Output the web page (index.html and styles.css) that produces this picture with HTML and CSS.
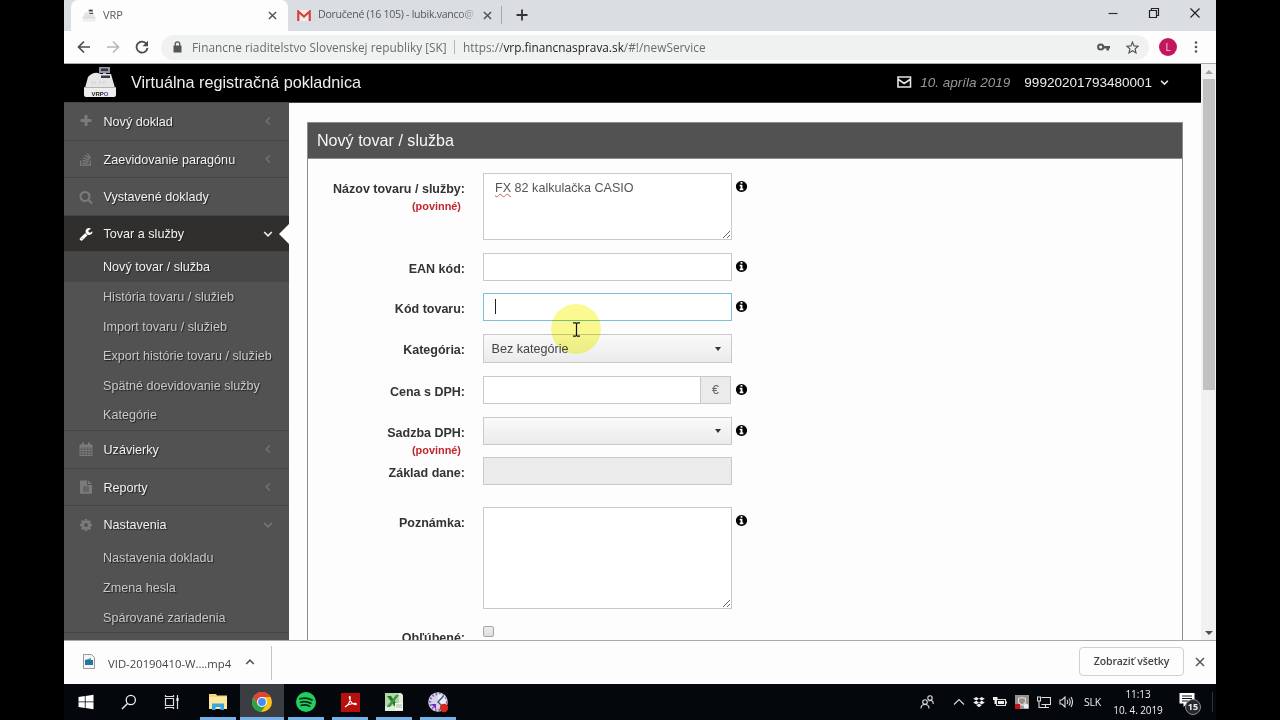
FILE: index.html
```html
<!DOCTYPE html>
<html lang="sk">
<head>
    <meta charset="UTF-8">
    <title>VRP</title>
    <link rel="stylesheet" href="styles.css">
</head>
<body>
<svg class="defs">
    <symbol id="info" viewBox="0 0 1792 1792"><path d="M1152 1376v-160q0-14-9-23t-23-9h-96v-512q0-14-9-23t-23-9h-320q-14 0-23 9t-9 23v160q0 14 9 23t23 9h96v320h-96q-14 0-23 9t-9 23v160q0 14 9 23t23 9h448q14 0 23-9t9-23zm-128-896v-160q0-14-9-23t-23-9h-192q-14 0-23 9t-9 23v160q0 14 9 23t23 9h192q14 0 23-9t9-23zm640 416q0 209-103 385.5t-279.5 279.5-385.5 103-385.5-103-279.5-279.5-103-385.5 103-385.5 279.5-279.5 385.5-103 385.5 103 279.5 279.5 103 385.5z"/></symbol>
    <symbol id="left" viewBox="0 0 10 10"><path d="M6.8 1.5 3.2 5l3.6 3.5" fill="none" stroke="currentColor" stroke-width="1.2"/></symbol>
    <symbol id="down" viewBox="0 0 10 10"><path d="M1.2 3 5 6.8 8.8 3" fill="none" stroke="currentColor" stroke-width="1.6"/></symbol>
    <symbol id="close" viewBox="0 0 10 10"><path d="M1 1l8 8M9 1 1 9" fill="none" stroke="currentColor" stroke-width="1.5"/></symbol>
    <symbol id="register" viewBox="0 0 34 32">
        <path d="M16 1h11v6H16z" fill="#9299a3"/><path d="M18 2.5h7v2.5h-7z" fill="#30343c"/>
        <path d="M20 7h3v3h-3z" fill="#bbb"/>
        <path d="M5 11q5-5 10-4l3 1h10l4 14H2z" fill="#e6e6e6"/>
        <path d="M1 21.500h32V29q0 2-2 2H3q-2 0-2-2z" fill="#eee"/>
        <path d="M18 9.500h9v2.500h-9z" fill="#333a48"/>
        <path d="M1 21.500h32" stroke="#b5b5b5"/><path d="M9 15v3M12 15v3M17 15v3M21 15v3" stroke="#cfcfcf"/>
    </symbol>
</svg>
<div class="screen">
    <div class="tabs">
        <div class="tab active">
            <svg class="favicon" width="14" height="13"><use href="#register"/></svg>
            <span class="tab-title vrp">VRP</span>
            <svg class="x" width="9" height="9"><use href="#close"/></svg>
        </div>
        <div class="tab second">
            <svg width="14" height="11" viewBox="0 0 14 11"><path d="M1 0h12v11H1z" fill="#f3eeee"/><path d="M1.300 11V1.500L7 6.500l5.700-5V11" fill="none" stroke="#d5403a" stroke-width="2.200"/></svg>
            <span class="tab-title mail">Doručené (16 105) - lubik.vanco@</span>
            <svg class="x" width="9" height="9"><use href="#close"/></svg>
        </div>
        <svg class="plus" width="12" height="12" viewBox="0 0 12 12"><path d="M6 .5v11M.5 6h11" stroke="#333" stroke-width="1.800"/></svg>
        <div class="window-btns">
            <svg width="12" height="12" viewBox="0 0 12 12"><path d="M1.500 6.500h9" stroke="#333" stroke-width="1.200"/></svg>
            <svg width="12" height="12" viewBox="0 0 12 12"><path d="M1.500 3.500h7v7h-7zM3.500 3.500v-2h7v7h-2" fill="none" stroke="#222" stroke-width="1.200"/></svg>
            <svg width="12" height="12" viewBox="0 0 12 12"><path d="M1.500 1.500l9 9M10.500 1.500l-9 9" stroke="#222" stroke-width="1.200"/></svg>
        </div>
    </div>
    <div class="toolbar">
        <svg width="14" height="14" viewBox="0 0 14 14"><path d="M13 7H2M7 1.500 1.500 7 7 12.500" fill="none" stroke="#4a4d50" stroke-width="1.700"/></svg>
        <svg width="14" height="14" viewBox="0 0 14 14"><path d="M1 7h11M7 1.500 12.500 7 7 12.500" fill="none" stroke="#b4b6b8" stroke-width="1.500"/></svg>
        <svg width="14" height="14" viewBox="0 0 14 14"><path d="M11.500 3.800A5.500 5.500 0 1 0 12.500 8" fill="none" stroke="#4a4d50" stroke-width="1.800"/><path d="M13 .8v5.500H7.500z" fill="#4a4d50"/></svg>
        <div class="address">
            <svg width="9" height="12" viewBox="0 0 9 12"><path d="M.5 4.500h8v7h-8z" fill="#555"/><path d="M2.300 5V3a2.200 2.200 0 0 1 4.400 0v2" fill="none" stroke="#555" stroke-width="1.300"/></svg>
            <span class="owner">Financne riaditelstvo Slovenskej republiky [SK]</span>
            <span class="url">https://<b>vrp.financnasprava.sk</b>/#!/newService</span>
            <svg class="key" width="13" height="8" viewBox="0 0 13 8"><circle cx="3.700" cy="4" r="2.600" fill="none" stroke="#555" stroke-width="2"/><path d="M6 3h7v2.500h-1V7.500H9.500V5.500H6z" fill="#555"/></svg>
            <svg width="13" height="13" viewBox="0 0 13 13"><path d="m6.500 1.200 1.600 3.700 4 .3-3 2.700.9 4-3.500-2.100L3 11.900l.9-4-3-2.700 4-.3z" fill="none" stroke="#555" stroke-width="1.200"/></svg>
        </div>
        <span class="avatar">L</span>
        <svg width="4" height="14" viewBox="0 0 4 14" fill="#555"><circle cx="2" cy="2.500" r="1.300"/><circle cx="2" cy="7" r="1.300"/><circle cx="2" cy="11.500" r="1.300"/></svg>
    </div>

    <div class="viewport">
        <div class="page">
            <header class="topbar">
                <div class="logo">
                    <svg width="34" height="32"><use href="#register"/></svg>
                    <span class="logo-text">VRP<i>O</i></span>
                </div>
                <span class="brand">Virtuálna registračná pokladnica</span>
                <svg width="15" height="12" viewBox="0 0 15 12"><path d="M1 1h12.500v10H1zM1.500 3.500l5.700 4 5.800-4" fill="none" stroke="#e4e4e4" stroke-width="1.600"/></svg>
                <span class="date">10. apríla 2019</span>
                <span class="account">99920201793480001</span>
                <svg class="acc-down" width="9" height="9"><use href="#down"/></svg>
            </header>
            <div class="body">
                <nav class="sidebar">
                    <div class="item"><svg class="ico" viewBox="0 0 1792 1792"><path d="M1600 736v192q0 40-28 68t-68 28h-416v416q0 40-28 68t-68 28h-192q-40 0-68-28t-28-68v-416h-416q-40 0-68-28t-28-68v-192q0-40 28-68t68-28h416v-416q0-40 28-68t68-28h192q40 0 68 28t28 68v416h416q40 0 68 28t28 68z"/></svg><span>Nový doklad</span><svg class="arrow"><use href="#left"/></svg></div>
                    <div class="item"><svg class="ico" viewBox="0 0 14 14"><path d="M1.500 8.500v4.700h9.800V8.500M3.200 11.200h6.200M3.300 8.700l6.200.7M4 6l6 1.900M5.700 3.300l5.200 3.300M8.300 1.500l3.400 4.800" fill="none" stroke="currentColor" stroke-width="1.200"/></svg><span>Zaevidovanie paragónu</span><svg class="arrow"><use href="#left"/></svg></div>
                    <div class="item"><svg class="ico" viewBox="0 0 1792 1792"><path d="M1216 832q0-185-131.500-316.500t-316.500-131.500-316.500 131.500-131.500 316.500 131.500 316.500 316.500 131.500 316.500-131.500 131.500-316.500zm512 832q0 52-38 90t-90 38q-54 0-90-38l-343-342q-179 124-399 124-143 0-273.500-55.500t-225-150-150-225-55.500-273.500 55.500-273.500 150-225 225-150 273.500-55.500 273.500 55.500 225 150 150 225 55.500 273.500q0 220-124 399l343 343q37 37 37 90z"/></svg><span>Vystavené doklady</span></div>
                    <div class="item current"><svg class="ico" viewBox="0 0 1792 1792"><path d="M448 1472q0-26-19-45t-45-19-45 19-19 45 19 45 45 19 45-19 19-45zm644-420l-682 682q-37 37-90 37-52 0-91-37l-106-108q-38-36-38-90 0-53 38-91l681-681q39 98 114.500 173.500t173.500 114.500zm634-435q0 39-23 106-47 134-164.500 217.500t-258.500 83.500q-185 0-316.500-131.500t-131.500-316.500 131.500-316.500 316.500-131.500q58 0 121.500 16.500t107.500 46.500q16 11 16 28t-16 28l-293 169v224l193 107q5-3 79-48.500t135.500-81 70.500-35.500q15 0 23.500 10t8.500 25z"/></svg><span>Tovar a služby</span><svg class="arrow"><use href="#down"/></svg></div>
                    <ul class="sub">
                        <li class="on">Nový tovar / služba</li>
                        <li>História tovaru / služieb</li>
                        <li>Import tovaru / služieb</li>
                        <li>Export histórie tovaru / služieb</li>
                        <li>Spätné doevidovanie služby</li>
                        <li>Kategórie</li>
                    </ul>
                    <div class="item"><svg class="ico" viewBox="0 0 14 14"><path d="M1 3h12v10.500H1zM1 6h12M1 8.500h12M1 11h12M4 6v7.500M7 6v7.500M10 6v7.500" fill="none" stroke="currentColor"/><path d="M1 3h12v2.500H1zM3 .5h2v3H3zM9 .5h2v3H9z"/></svg><span>Uzávierky</span><svg class="arrow"><use href="#left"/></svg></div>
                    <div class="item"><svg class="ico" viewBox="0 0 14 14"><path fill-rule="evenodd" d="M1 .5h7V5h5v8.800H1zM9 .5 13 4H9zM4 6.500h6v1H4zm0 2h6v1H4zm0 2h6v1H4z"/></svg><span>Reporty</span><svg class="arrow"><use href="#left"/></svg></div>
                    <div class="item open"><svg class="ico" viewBox="0 0 1792 1792"><path d="M1152 896q0-106-75-181t-181-75-181 75-75 181 75 181 181 75 181-75 75-181zm512-109v222q0 12-8 23t-20 13l-185 28q-19 54-39 91 35 50 107 138 10 12 10 25t-9 23q-27 37-99 108t-94 71q-12 0-26-9l-138-108q-44 23-91 38-16 136-29 186-7 28-36 28h-222q-14 0-24.500-8.500t-11.500-21.500l-28-184q-49-16-90-37l-141 107q-10 9-25 9-14 0-25-11-126-114-165-168-7-10-7-23 0-12 8-23 15-21 51-66.500t54-70.500q-27-50-41-99l-183-27q-13-2-21-12.500t-8-23.500v-222q0-12 8-23t19-13l186-28q14-46 39-92-40-57-107-138-10-12-10-24 0-10 9-23 26-36 98.500-107.500t94.500-71.500q13 0 26 10l138 107q44-23 91-38 16-136 29-186 7-28 36-28h222q14 0 24.500 8.500t11.500 21.500l28 184q49 16 90 37l142-107q9-9 24-9 13 0 25 10 129 119 165 170 7 8 7 22 0 12-8 23-15 21-51 66.500t-54 70.500q26 50 41 98l183 28q13 2 21 12.500t8 23.500z"/></svg><span>Nastavenia</span><svg class="arrow"><use href="#down"/></svg></div>
                    <ul class="sub">
                        <li>Nastavenia dokladu</li>
                        <li>Zmena hesla</li>
                        <li>Spárované zariadenia</li>
                    </ul>
                </nav>
                <main class="content">
                    <section class="card">
                        <h1>Nový tovar / služba</h1>
                        <form>
                            <div class="row name">
                                <label>Názov tovaru / služby:<small>(povinné)</small></label>
                                <div class="field area"><u>FX</u> 82 kalkulačka CASIO</div>
                                <svg class="info"><use href="#info"/></svg>
                            </div>
                            <div class="row">
                                <label>EAN kód:</label>
                                <input class="field" type="text">
                                <svg class="info"><use href="#info"/></svg>
                            </div>
                            <div class="row code">
                                <label>Kód tovaru:</label>
                                <div class="field focus"><span class="caret"></span></div>
                                <svg class="info"><use href="#info"/></svg>
                            </div>
                            <div class="row category">
                                <label>Kategória:</label>
                                <div class="field select"><span>Bez kategórie</span></div>
                            </div>
                            <div class="row">
                                <label>Cena s DPH:</label>
                                <div class="group"><input class="field" type="text"><span class="addon">€</span></div>
                                <svg class="info"><use href="#info"/></svg>
                            </div>
                            <div class="row rate">
                                <label>Sadzba DPH:<small>(povinné)</small></label>
                                <div class="field select"></div>
                                <svg class="info"><use href="#info"/></svg>
                            </div>
                            <div class="row base">
                                <label>Základ dane:</label>
                                <input class="field" type="text" disabled>
                            </div>
                            <div class="row note">
                                <label>Poznámka:</label>
                                <textarea class="field area"></textarea>
                                <svg class="info"><use href="#info"/></svg>
                            </div>
                            <div class="row fav">
                                <label>Obľúbené:</label>
                                <span class="check"></span>
                            </div>
                        </form>
                    </section>
                </main>
            </div>
        </div>
        <div class="scrollbar">
            <span class="up"></span>
            <span class="thumb"></span>
            <span class="dn"></span>
        </div>
    </div>

    <div class="downloads">
        <div class="download">
            <svg width="12" height="15" viewBox="0 0 12 15"><path d="M.5.500h8l3 3v11H.5z" fill="#f5f5f5" stroke="#999"/><path d="M2 6h8v5H2z" fill="#2374a5"/><path d="M2 6l6-2v2z" fill="#4d91b8"/></svg>
            <span class="file">VID-20190410-W....mp4</span>
            <svg class="file-up" width="10" height="10"><use href="#down"/></svg>
        </div>
        <span class="show-all">Zobraziť všetky</span>
        <svg class="x" width="10" height="10"><use href="#close"/></svg>
    </div>

    <div class="taskbar">
        <div class="slot"><svg width="16" height="16" viewBox="0 0 16 16"><path d="M.5 3 6.800 2v5.500H.5zM7.600 1.900 15.500.800v6.700H7.600zM.5 8.300h6.300v5.600l-6.300-1zM7.600 8.300h7.900v6.900L7.600 14z" fill="#fff"/></svg></div>
        <div class="slot"><svg width="16" height="16" viewBox="0 0 16 16"><circle cx="9.800" cy="6" r="4.600" fill="none" stroke="#eee" stroke-width="1.300"/><path d="M6.500 9.500 1 15" stroke="#eee" stroke-width="1.400"/></svg></div>
        <div class="slot"><svg width="16" height="16" viewBox="0 0 16 16"><path d="M1.500 4.500h8v7h-8zM1.500 1v1.500h8V1M1.500 15v-1.500h8V15M13.500 1v14" fill="none" stroke="#ddd" stroke-width="1.200"/><path d="M12.500 4h2v3h-2z" fill="#fff"/></svg></div>
        <div class="slot app first"><svg width="20" height="18" viewBox="0 0 20 18"><path d="M1 1h7l1 1.500h10V16H1z" fill="#f6d676"/><path d="M1 4h18v12H1z" fill="#fbe79f"/><path d="M4 17v-6.500h12V17h-3.500v-3h-5v3z" fill="#39a7de"/></svg></div>
        <div class="slot app here"><svg width="20" height="20" viewBox="0 0 20 20"><circle cx="10" cy="10" r="10" fill="#fbc116"/><path d="M10 10 1.340 5A10 10 0 0 1 18.660 5H10z" fill="#df4532"/><path d="M1.340 5A10 10 0 0 0 9 19.950L14.300 12.500 5.700 12.500z" fill="#2ba24c"/><path d="M1.340 5 5.700 12.500 10 5z" fill="#df4532"/><circle cx="10" cy="10" r="5" fill="#fff"/><circle cx="10" cy="10" r="3.900" fill="#4a8af4"/></svg></div>
        <div class="slot app"><svg width="20" height="20" viewBox="0 0 20 20"><circle cx="10" cy="10" r="10" fill="#1fcf5f"/><path d="M4 6.800q6.500-2 12 1.200M4.600 10.200q5.500-1.500 10.200 1.100M5.200 13.400q4.500-1.200 8.400.9" fill="none" stroke="#0a2914" stroke-width="1.700" stroke-linecap="round"/></svg></div>
        <div class="slot app"><svg width="19" height="19" viewBox="0 0 19 19"><path d="M0 0h19v19H0z" fill="#b80f0d"/><path d="M4 14c3-1.500 5.500-5.500 5.300-9.500-.1-1.500-1.300-1-1 .5.700 3.500 3.500 6.500 6.200 6.600 1.500 0 1-1.300-.5-1.200-3.500.2-8 1.600-10 3.600z" fill="none" stroke="#fff" stroke-width="1.100"/></svg></div>
        <div class="slot app"><svg width="20" height="20" viewBox="0 0 20 20"><path d="M1 1h16l2 2v16H1z" fill="#e0eedb"/><path d="M1 1h14v13H1z" fill="#b4d8a5"/><path d="M3 4h4l8 11h-4z" fill="#257a32"/><path d="M12 3h3L6 15H2.500z" fill="#3d9445"/><path d="M11 11h8v7h-8z" fill="#f4f8f2"/><path d="M12 13h6M12 15h6" stroke="#9fc39a"/></svg></div>
        <div class="slot app"><svg width="22" height="22" viewBox="0 0 22 22"><circle cx="11" cy="11" r="9.800" fill="#d9d3ea"/><circle cx="11" cy="11" r="8" fill="none" stroke="#8460b8" stroke-width="2.500" stroke-dasharray="1.500 2"/><path d="M11 3a8 8 0 0 1 8 8 8 8 0 0 1-5 7l-3-7z" fill="#e7edf5"/><path d="M16.500 5 11 11l4 4" fill="none" stroke="#3d5382" stroke-width="1.400"/><path d="M4 13h5v5z" fill="#7229bd"/><circle cx="17" cy="17" r="4.200" fill="#d8261d"/></svg></div>
        <div class="tray">
            <svg class="people" width="14" height="14" viewBox="0 0 14 14"><circle cx="5" cy="7" r="2.300"/><path d="M1 13.500q0-4 4-4t4 4"/><circle cx="10" cy="3" r="2.200"/><path d="M8.500 6q4.500-2 4.800 3"/></svg>
            <svg width="12" height="12" viewBox="0 0 12 12"><path d="m1 8.500 5-5 5 5"/></svg>
            <svg width="12" height="12" viewBox="0 0 12 12"><path d="m3.300 1 2.700 1.800-2.700 1.800L.200 2.800zM8.700 1l3.100 1.800-3.100 1.800L6 2.800zM3.300 4.800 6 6.600 3.300 8.400.200 6.600zM8.700 4.800l3.100 1.800-3.100 1.800L6 6.600zM3.300 9.300 6 7.600l2.700 1.700L6 11.200z" fill="#eee" stroke="none"/></svg>
            <svg width="14" height="12" viewBox="0 0 14 12"><path d="M3.500 3.500h9v6h-9z"/><path d="M5 5h6v3H5zM12.500 5.500h1.500v2h-1.500zM0 1h4.500v3H3v4H1.500V4H0z" fill="#eee" stroke="none"/></svg>
            <svg width="14" height="14" viewBox="0 0 14 14"><path d="M0 0h14v14H0z" fill="#99908c" stroke="none"/><path d="M3.500 3.500 7 2.500l3.500 1v4L7 10.500l-3.500-3z" stroke="#ddd"/><path d="M0 9h5v5H0z" fill="#c0161a" stroke="none"/><circle cx="11" cy="11" r="2.500" fill="#eee" stroke="none"/></svg>
            <svg width="14" height="14" viewBox="0 0 14 14"><path d="M4.500 2.500h9v7h-9M8.500 9.500v3M5 12.500h7M.5 2h3v4h-3zM2 6v6.500h3"/></svg>
            <svg width="14" height="12" viewBox="0 0 14 12"><path d="M1 4h2l3-3v10L3 8H1zM8 4q1.500 2 0 4M10 2.500q2.500 3.500 0 7M12 1q3 5 0 10"/></svg>
            <span class="lang">SLK</span>
            <div class="clock"><span>11:13</span><span>10. 4. 2019</span></div>
            <div class="notif"><svg width="16" height="16" viewBox="0 0 16 16"><path d="M.5 1h15v10.500H8L4.500 15v-3.500h-4z" fill="#fff" stroke="none"/><path d="M3 4h10M3 6.500h10M3 9h6" stroke="#111"/></svg><b>15</b></div>
        </div>
    </div>

    <div class="pointer"><svg width="9" height="15" viewBox="0 0 9 15"><path d="M1 .800h2.500l1 .7 1-.7H8M4.500 1.500v12M1 14.200h2.500l1-.7 1 .7H8" fill="none" stroke="#111" stroke-width="1.200"/></svg></div>
</div>
</body>
</html>
```

FILE: styles.css
```css
*{
    box-sizing: border-box;
}
body{
    margin: 0;
    background: #000;
    font-family: "Liberation Sans", Arial, sans-serif;
    font-size: 12.6px;
    color: #333;
}
svg{
    flex: none;
    display: block;
}
.defs{
    display: none;
}
.screen{
    position: relative;
    width: 1152px;
    height: 720px;
    margin: 0 auto;
    overflow: hidden;
    background: #fdfdfd;
}

/* browser */
.tabs,
.toolbar,
.downloads,
.taskbar{
    font-family: "Open Sans", "Noto Sans", sans-serif;
    font-size: 11px;
}
.tabs{
    display: flex;
    height: 31px;
    background: #dadde2;
    padding-left: 7px;
}
.tab{
    display: flex;
    align-items: center;
    height: 31px;
    color: #55585c;
    white-space: nowrap;
}
.tab.active{
    width: 217px;
    padding: 0 11px 0 11px;
    background: #fdfdfd;
    border-radius: 7px 7px 0 0;
}
.tab-title{
    flex: 1;
}
.vrp{
    margin: -2px 0 0 7px;
}
.tab .x{
    color: #4c4f52;
}
.tab.second{
    width: 214px;
    height: 18px;
    margin-top: 6px;
    padding: 0 9px;
    border-right: 1px solid #a5a8ad;
}
.mail{
    margin: -2px 8px 0 7px;
    font-size: 10.6px;
    letter-spacing: -0.28px;
    -webkit-mask-image: linear-gradient(90deg, #000 90%, rgba(0,0,0,.2));
    mask-image: linear-gradient(90deg, #000 90%, rgba(0,0,0,.2));
}
.plus{
    margin: 9px 0 0 14px;
}
.window-btns{
    display: flex;
    gap: 29px;
    margin: 7px 15px 0 auto;
}
.toolbar{
    display: flex;
    align-items: center;
    height: 33px;
    padding: 0 18px 0 13px;
    gap: 15px;
    border-bottom: 1px solid #aaa;
}
.address{
    display: flex;
    align-items: center;
    flex: 1;
    height: 25px;
    margin-left: -3px;
    padding: 0 10px 0 12px;
    background: #f0f2f1;
    border-radius: 13px;
    font-size: 11.8px;
    color: #686b6e;
    white-space: nowrap;
}
.owner{
    margin-left: 10px;
    width: 263px;
    border-right: 1px solid #b5b5b5;
    line-height: 14px;
    letter-spacing: 0.03px;
}
.url{
    margin-left: 8px;
    line-height: 14px;
    letter-spacing: 0.02px;
}
.url b{
    font-weight: 400;
    color: #222;
}
.key{
    margin: 0 16px 0 auto;
}
.avatar{
    width: 18px;
    height: 18px;
    margin: 0 4px 0 -5px;
    border-radius: 50%;
    background: #c2185b;
    color: #f3cddb;
    line-height: 18px;
    text-align: center;
    font-size: 10px;
}
.toolbar > .avatar + svg{
    margin-left: -2px;
}

/* VRP page */
.viewport{
    display: flex;
    height: 576px;
    overflow: hidden;
}
.page{
    width: 1137px;
    height: 576px;
    overflow: hidden;
}
.topbar{
    display: flex;
    align-items: center;
    height: 39px;
    padding: 0 32px 2px 19px;
    background: #000;
    color: #eee;
    border-bottom: 1px solid #444;
}
.logo{
    position: relative;
    width: 34px;
    height: 32px;
}
.logo-text{
    position: absolute;
    left: 0;
    right: 0;
    bottom: 1px;
    text-align: center;
    font-size: 6px;
    font-weight: bold;
    color: #222;
}
.logo-text i{
    font-style: normal;
    color: #4b4da0;
}
.brand{
    flex: 1;
    margin-left: 14px;
    font-size: 16.2px;
}
.date{
    margin-left: 8px;
    font-size: 13.5px;
    font-style: italic;
    color: #999;
}
.account{
    margin: 0 8px 0 14px;
    font-size: 13.5px;
}
.body{
    display: flex;
}
.sidebar{
    width: 225px;
    height: 540px;
    flex: none;
    background: #525252;
    color: #f2f2f2;
    text-shadow: 1px 1px 1px #222;
}
.item{
    display: flex;
    align-items: center;
    height: 37.7px;
    padding: 0 16px 0 15px;
    border-bottom: 1px solid #444;
}
.item span{
    flex: 1;
    margin-left: 10.5px;
    padding-top: 1px;
}
.ico{
    width: 14px;
    height: 14px;
    fill: #7b7b7b;
    color: #7b7b7b;
}
.arrow{
    width: 10px;
    height: 10px;
    color: #777;
}
.current{
    position: relative;
    height: 36.4px;
    background: #302f2e;
}
.current span{
    padding: 0;
}
.current .ico{
    fill: #fff;
}
.current .arrow{
    color: #eee;
}
.current::after{
    content: "";
    position: absolute;
    right: 0;
    top: 8px;
    border: 10px solid transparent;
    border-right-color: #fff;
    border-left: 0;
}
.open{
    height: 37px;
    border-bottom: 0;
}
.sub{
    list-style: none;
    margin: 0;
    border-bottom: 1px solid #444;
    padding: 0;
}
.sub li{
    height: 29.6px;
    line-height: 31px;
    padding-left: 39px;
    color: #c9c9c9;
}
.sub .on{
    background: #474747;
    color: #f2f2f2;
}
.content{
    padding: 19px 0 0 18px;
}
.card{
    width: 876px;
    height: 600px;
    border: 1px solid #8c8c8c;
    background: #fdfdfd;
}
.card h1{
    margin: 0;
    height: 36px;
    padding-left: 9px;
    background: #525252;
    border-bottom: 1px solid #8c8c8c;
    color: #f6f6f6;
    font-size: 16.1px;
    font-weight: 400;
    line-height: 35px;
}
form{
    padding-top: 14px;
}
.row{
    display: flex;
    height: 27px;
    margin-bottom: 14px;
}
label{
    width: 157px;
    margin-right: 18px;
    padding-top: 6px;
    text-align: right;
    font-size: 12.5px;
    font-weight: bold;
    line-height: 20px;
    white-space: nowrap;
}
small{
    display: block;
    padding-right: 4px;
    color: #c1272d;
    font-size: 10.9px;
    line-height: 15px;
}
.field{
    width: 249px;
    height: 27.5px;
    padding: 0 11px;
    border: 1px solid #c9c9c9;
    background: #fff;
    color: #555;
    font: inherit;
}
.field:disabled{
    background: #ebebeb;
}
.area{
    resize: both;
    overflow: auto;
    height: 100%;
    padding-top: 7px;
}
.area u{
    text-decoration: underline wavy #d06060 1px;
    text-underline-offset: 1px;
}
.name{
    height: 67px;
    margin-bottom: 13px;
}
.code{
    margin: -1px 0 14px;
}
.focus{
    border-color: #7cc0dc;
}
.caret{
    display: block;
    width: 1px;
    height: 15px;
    margin-top: 5px;
    background: #222;
}
.select{
    display: flex;
    align-items: center;
    padding-left: 7.5px;
    background: linear-gradient(#fafafa, #ebebeb);
    color: #444;
}
.select::after{
    content: "";
    margin: 0 -1px 0 auto;
    border: 3.5px solid transparent;
    border-top: 4px solid #333;
    border-bottom: 0;
}
.category{
    height: 28px;
}
.category .select{
    height: 29px;
}
.group{
    display: flex;
    width: 249px;
    padding-right: 1px;
}
.group .field{
    width: 218px;
}
.addon{
    width: 30px;
    height: 27.5px;
    border: 1px solid #c9c9c9;
    border-left: 0;
    background: #ebebeb;
    color: #666;
    line-height: 26px;
    text-align: center;
}
.info{
    width: 13px;
    height: 13px;
    margin: 7px 0 0 3px;
    fill: #000;
}
.rate{
    margin-bottom: 13px;
}
.base{
    margin-bottom: 23px;
}
.note{
    height: 102px;
    margin-bottom: 17px;
}
.fav label{
    padding-top: 2px;
}
.check{
    width: 11px;
    height: 11px;
    border: 1px solid #a5a5a5;
    border-radius: 2px;
    background: linear-gradient(#eee, #ddd);
}
.scrollbar{
    display: flex;
    flex-direction: column;
    align-items: center;
    width: 15px;
    padding: 6px 0 5px;
    background: #f1f1f1;
}
.up,
.dn{
    border: 4px solid transparent;
    border-bottom-color: #a3a3a3;
    border-top: 0;
}
.dn{
    margin-top: auto;
    border-top: 4px solid #505050;
    border-bottom: 0;
}
.thumb{
    width: 12px;
    height: 311px;
    margin-top: 5px;
    background: #c1c1c1;
}

/* downloads bar */
.downloads{
    display: flex;
    align-items: center;
    height: 44px;
    padding: 0 11px 0 0;
    border-top: 1px solid #aaa;
    color: #444;
}
.download{
    display: flex;
    align-items: center;
    width: 208px;
    height: 34px;
    padding: 0 0 2px 19px;
    border-right: 1px solid #c4c4c4;
}
.file{
    width: 124px;
    margin: 4px 0 0 13px;
    font-size: 11.3px;
    white-space: nowrap;
}
.file-up{
    margin-left: 13px;
    transform: rotate(180deg);
    color: #555;
}
.show-all{
    width: 105px;
    height: 29px;
    margin: -3px 11px 0 auto;
    border: 1px solid #d0d0d0;
    border-radius: 4px;
    text-align: center;
    line-height: 27px;
    font-weight: 600;
    font-size: 10.5px;
    letter-spacing: -0.1px;
}
.downloads .x{
    margin-top: -2px;
    color: #555;
}

/* taskbar */
.taskbar{
    display: flex;
    height: 36px;
    background: #04070c;
    color: #eee;
}
.slot{
    display: flex;
    align-items: center;
    justify-content: center;
    width: 43px;
}
.app{
    width: 36px;
    margin: 0 4px;
    border-bottom: 3px solid #75b0e6;
    padding-top: 3px;
}
.app.first{
    margin-left: 7px;
}
.app.here{
    width: 44px;
    margin: 0;
    background: #3a3d41;
}
.tray{
    display: flex;
    align-items: center;
    flex: 1;
    justify-content: flex-end;
    gap: 8px;
    padding-right: 3px;
}
.tray svg{
    fill: none;
    stroke: #ddd;
    stroke-width: 1.1;
}
.tray .people{
    margin-right: 11px;
}
.lang{
    width: 18px;
    margin-left: 3px;
    font-size: 10.5px;
    letter-spacing: -0.2px;
}
.clock{
    display: flex;
    flex-direction: column;
    width: 54px;
    margin-left: 1px;
    text-align: center;
    font-size: 10px;
    letter-spacing: -0.1px;
    line-height: 16px;
    white-space: nowrap;
}
.notif{
    position: relative;
    width: 34px;
    height: 20px;
    margin-left: 6px;
    border-right: 1px solid #333;
}
.notif b{
    position: absolute;
    left: 6px;
    top: 7px;
    width: 16px;
    height: 16px;
    border: 1px solid #888;
    border-radius: 50%;
    background: #26292d;
    font-size: 9px;
    line-height: 14px;
    text-align: center;
}

/* mouse highlight */
.pointer{
    position: absolute;
    left: 487px;
    top: 304px;
    width: 50px;
    height: 50px;
    border-radius: 50%;
    background: #fafa90;
    mix-blend-mode: multiply;
    display: flex;
    align-items: center;
    justify-content: center;
}
```
